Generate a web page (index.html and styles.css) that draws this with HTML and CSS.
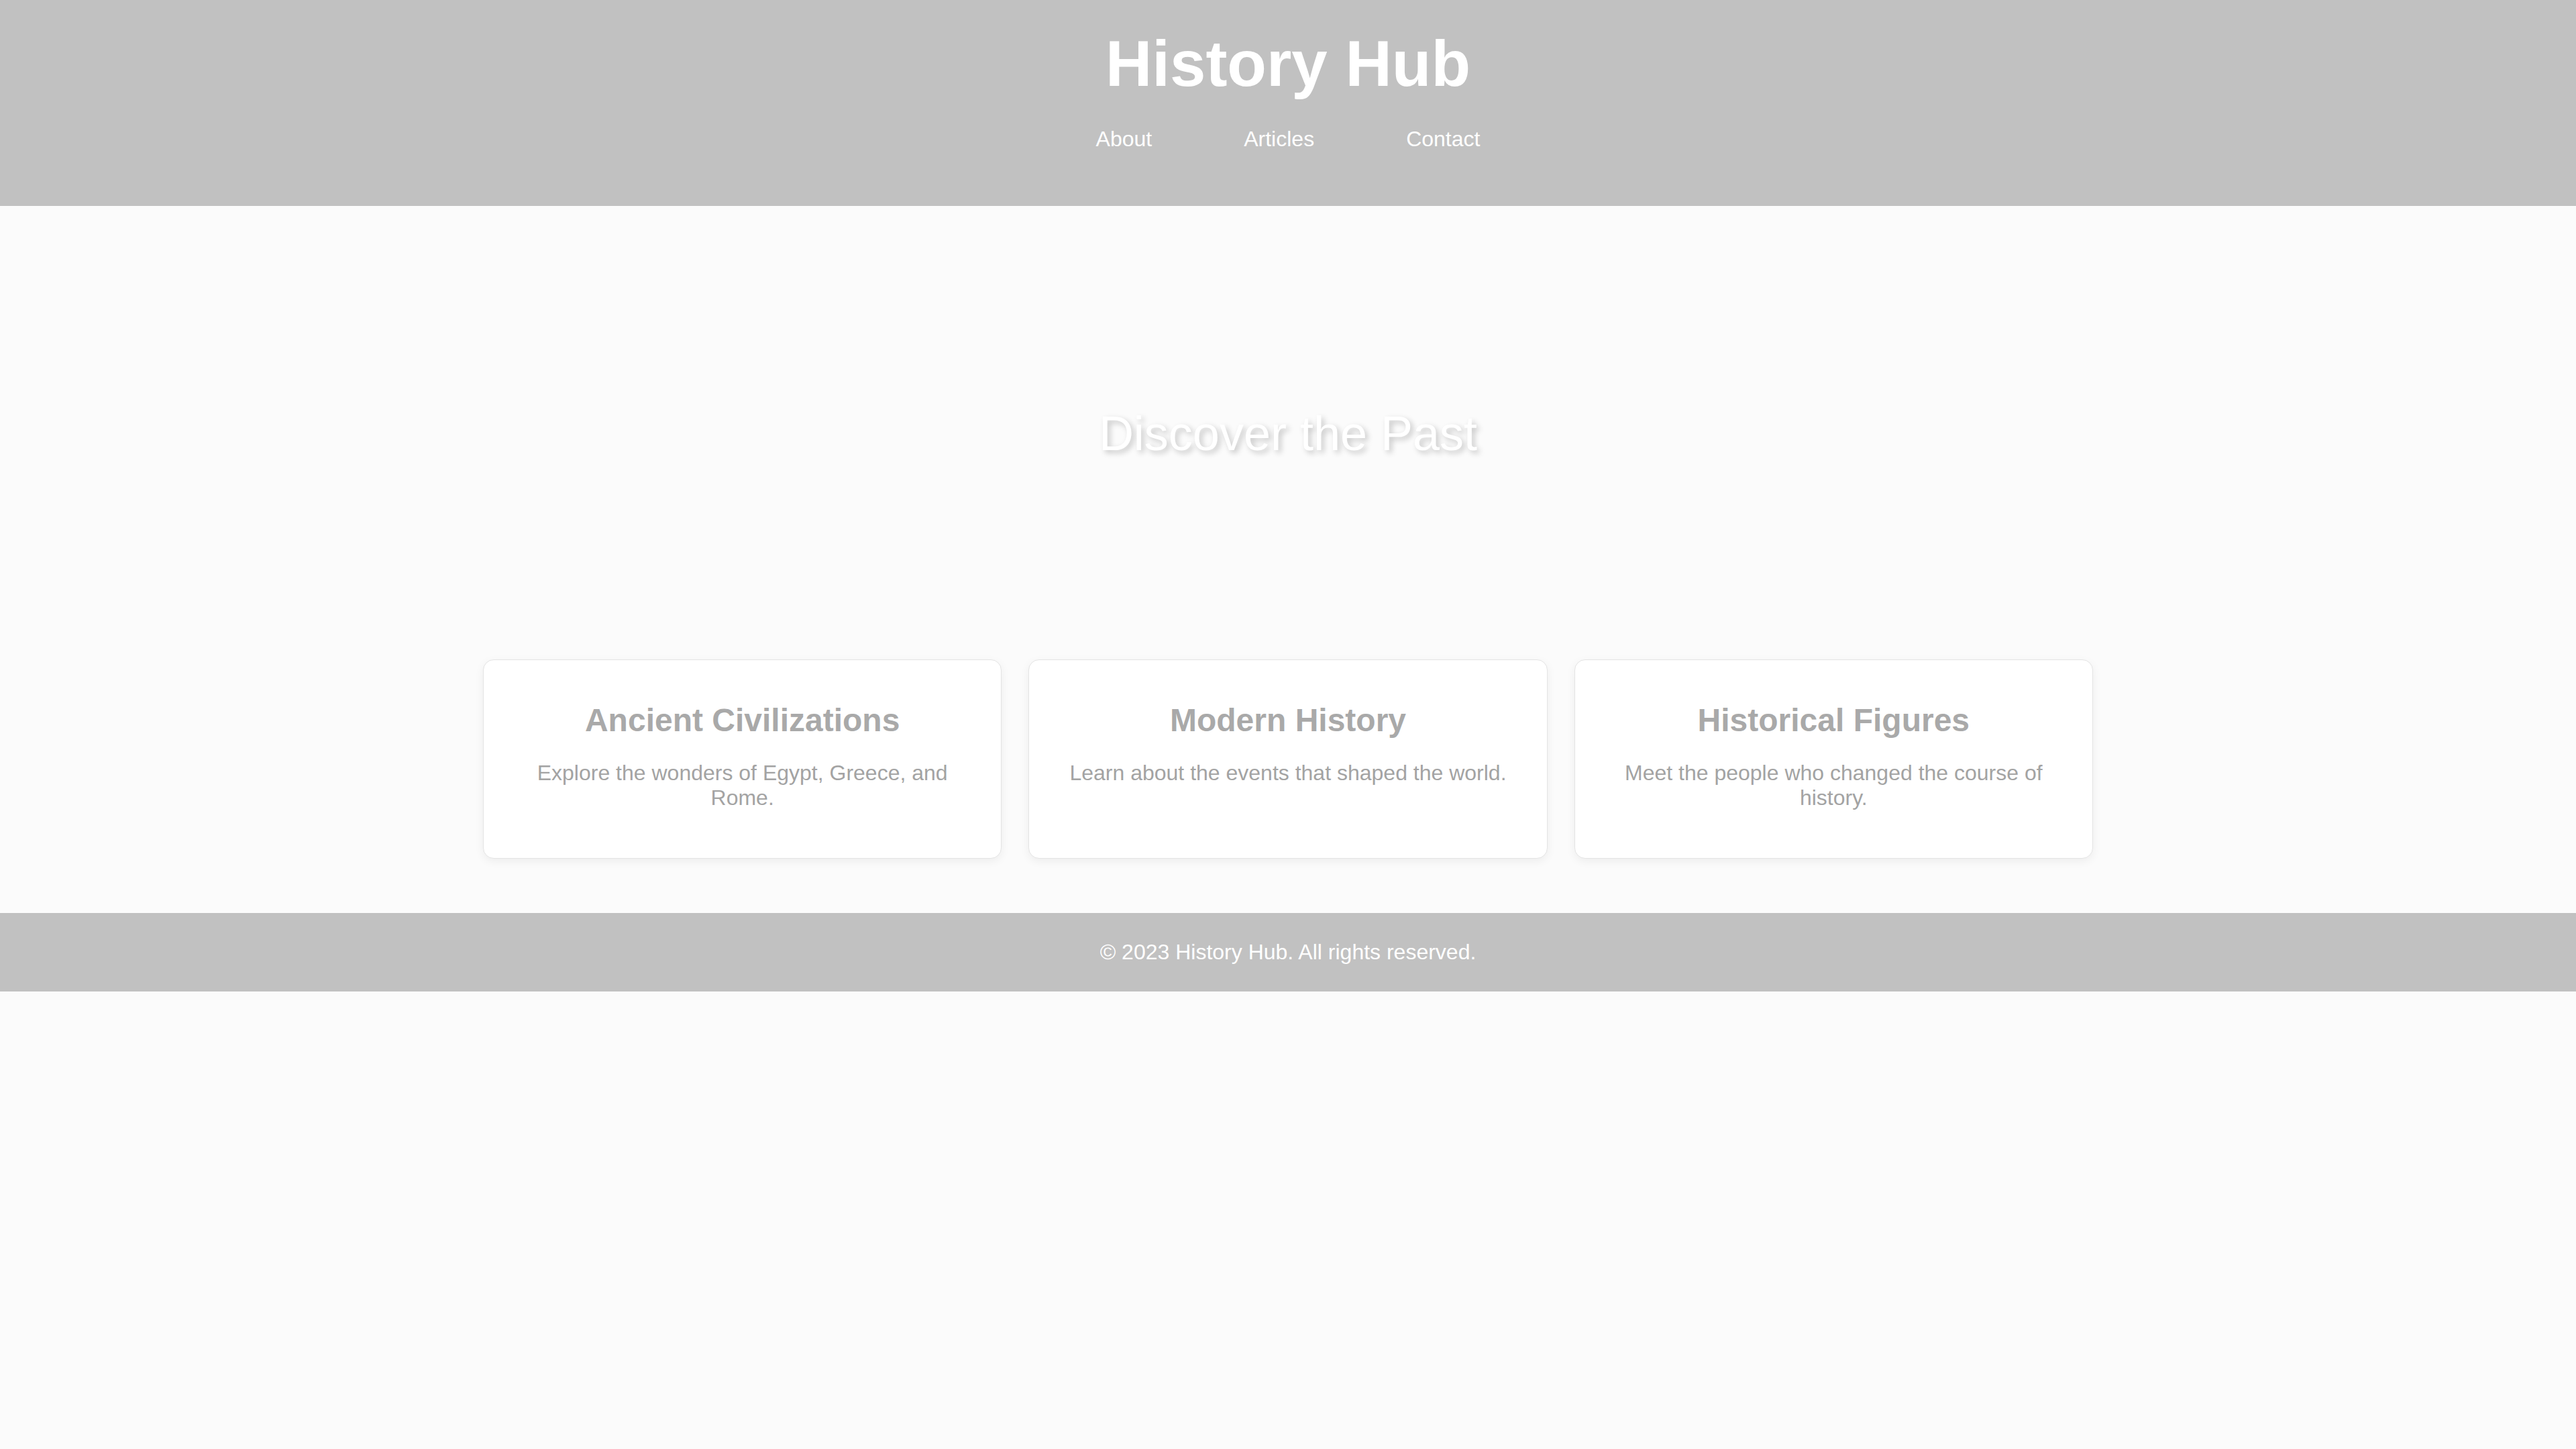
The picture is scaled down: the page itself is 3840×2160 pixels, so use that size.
FILE: index.html
```html
<!DOCTYPE html>
<html lang="en">
<head>
<meta charset="utf-8">
<title>History Hub</title>
<link rel="stylesheet" href="styles.css">
</head>
<body>
<header class="site-header">
  <h1 class="site-title">History Hub</h1>
  <nav class="site-nav">
    <a href="#" class="nav-link">About</a>
    <a href="#" class="nav-link">Articles</a>
    <a href="#" class="nav-link">Contact</a>
  </nav>
</header>
<main>
  <section class="hero">
    <h2 class="hero-title">Discover the Past</h2>
  </section>
  <section class="cards">
    <article class="card">
      <h3 class="card-title">Ancient Civilizations</h3>
      <p class="card-text">Explore the wonders of Egypt, Greece, and Rome.</p>
    </article>
    <article class="card">
      <h3 class="card-title">Modern History</h3>
      <p class="card-text">Learn about the events that shaped the world.</p>
    </article>
    <article class="card">
      <h3 class="card-title">Historical Figures</h3>
      <p class="card-text">Meet the people who changed the course of history.</p>
    </article>
  </section>
</main>
<footer class="site-footer">
  <p class="footer-text">© 2023 History Hub. All rights reserved.</p>
</footer>
</body>
</html>
```
FILE: styles.css
```css
html, body {
  margin: 0;
  padding: 0;
}
body {
  background: #fbfbfb;
  font-family: "Liberation Sans", Arial, sans-serif;
  min-height: 2160px;
}
.site-header {
  background: #c1c1c1;
  padding: 40px 0 0;
  height: 267px;
  text-align: center;
}
.site-title {
  margin: 0 0 39px;
  font-size: 96px;
  font-weight: bold;
  color: #ffffff;
  line-height: 110px;
}
.site-nav {
  display: flex;
  justify-content: center;
  gap: 137px;
}
.nav-link {
  color: #ffffff;
  text-decoration: none;
  font-size: 32px;
  line-height: 37px;
}
.hero {
  padding: 298px 0 295px;
  text-align: center;
}
.hero-title {
  margin: 0;
  font-size: 72px;
  font-weight: normal;
  line-height: 83px;
  color: #ffffff;
  text-shadow: 4px 4px 8px rgba(0, 0, 0, 0.22);
}
.cards {
  width: 2400px;
  margin: 0 auto;
  padding-bottom: 81px;
  display: grid;
  grid-template-columns: repeat(3, 1fr);
  gap: 40px;
}
.card {
  background: #ffffff;
  border: 1px solid #e4e4e4;
  border-radius: 16px;
  box-shadow: 0 4px 14px rgba(0, 0, 0, 0.06);
  padding: 39px 40px 39px;
  text-align: center;
}
.card-title {
  margin: 23px 0 33px;
  font-size: 48px;
  line-height: 55px;
  font-weight: bold;
  color: #a9a9a9;
}
.card-text {
  margin: 0 0 32px;
  font-size: 32px;
  line-height: 37px;
  color: #a3a3a3;
}
.site-footer {
  background: #c1c1c1;
  padding: 40px 0;
  text-align: center;
}
.footer-text {
  margin: 0;
  color: #ffffff;
  font-size: 32px;
  line-height: 37px;
}
```
